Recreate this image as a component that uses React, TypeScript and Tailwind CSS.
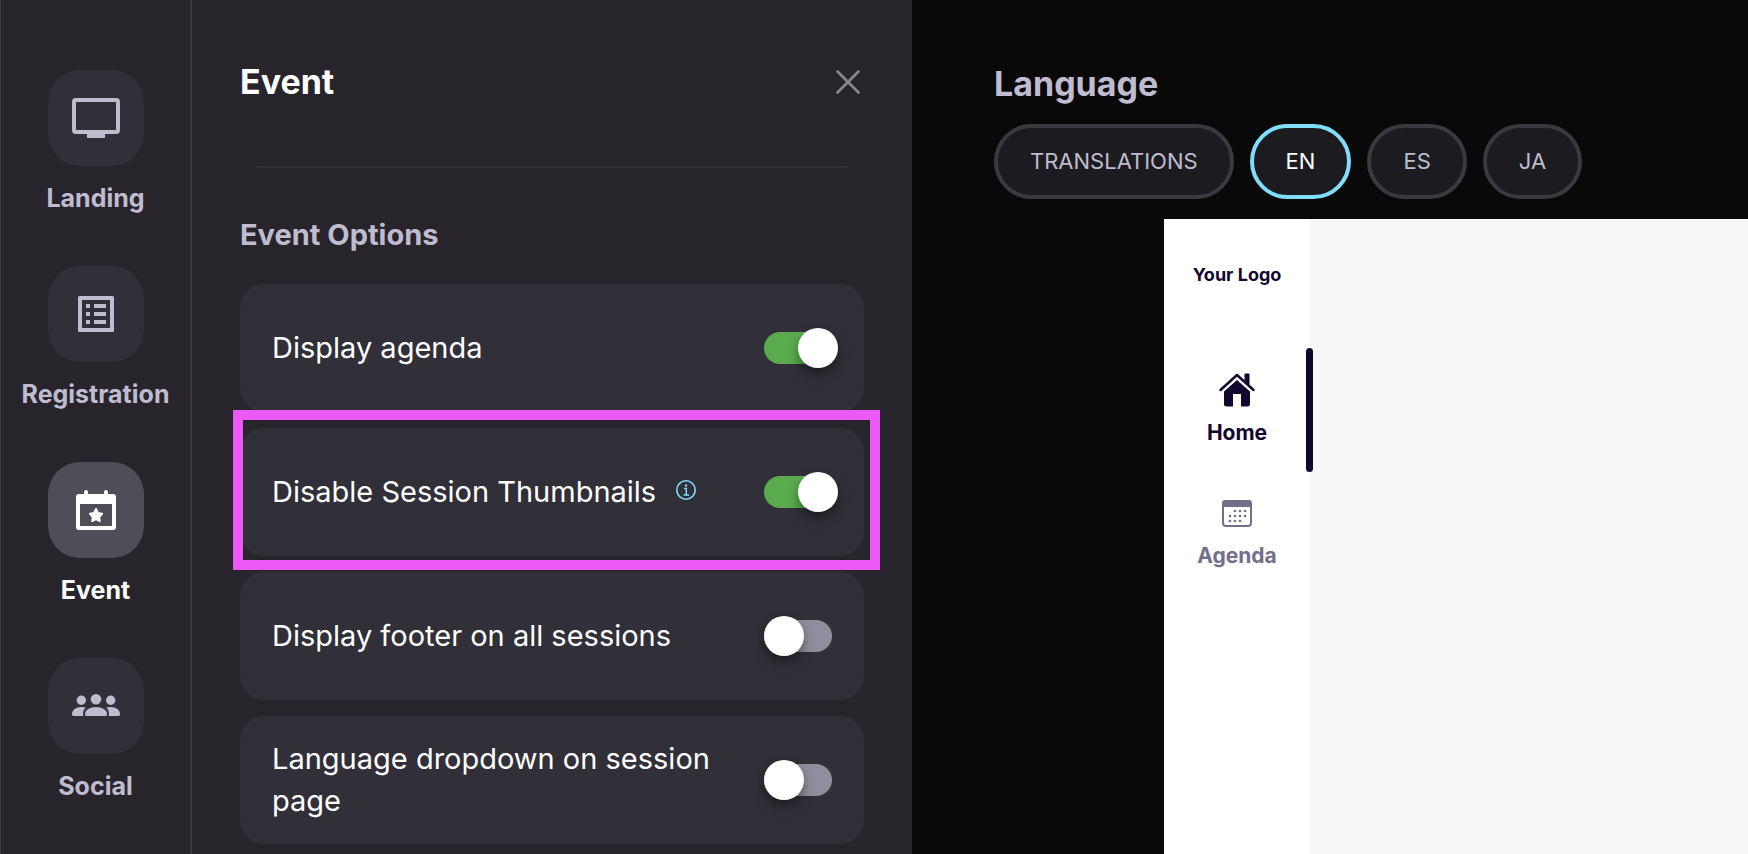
import { useState } from "react";
import type { ReactNode } from "react";

const TvIcon = () => (
  <svg width="48" height="40" viewBox="0 0 48 40" fill="none">
    <rect x="2" y="2" width="44" height="32" rx="2" stroke="currentColor" strokeWidth="4" />
    <path d="M15 34h18v6H15z" fill="currentColor" />
  </svg>
);

const ListIcon = () => (
  <svg width="36" height="36" viewBox="0 0 36 36" fill="currentColor">
    <path
      fillRule="evenodd"
      d="M1.500 0h33A1.500 1.500 0 0 1 36 1.500v33a1.500 1.500 0 0 1-1.500 1.500h-33A1.500 1.500 0 0 1 0 34.500v-33A1.500 1.500 0 0 1 1.500 0zM4 4v28h28V4z"
    />
    <path d="M8 8h4v4H8zM16 8h12v4H16zM8 16h4v4H8zM16 16h12v4H16zM8 24h4v4H8zM16 24h12v4H16z" />
  </svg>
);

const CalendarStarIcon = () => (
  <svg width="40" height="40" viewBox="0 0 40 40" fill="currentColor">
    <path
      fillRule="evenodd"
      d="M8 2a2 2 0 0 1 4 0v2h16V2a2 2 0 0 1 4 0v2h5a3 3 0 0 1 3 3v30a3 3 0 0 1-3 3H3a3 3 0 0 1-3-3V7a3 3 0 0 1 3-3h5zM4 14v22h32V14z"
    />
    <path
      d="M20 19l2 4 4 .8-2.800 3.200.6 4-3.800-1.800L16.200 31l.6-4-2.800-3.200 4-.8z"
      stroke="currentColor"
      strokeWidth="2"
      strokeLinejoin="round"
    />
  </svg>
);

const PeopleIcon = () => (
  <svg width="48" height="24" viewBox="0 0 48 24" fill="currentColor">
    <circle cx="24" cy="5.300" r="5.300" />
    <circle cx="9.300" cy="6.300" r="4.700" />
    <circle cx="38.700" cy="6.300" r="4.700" />
    <path d="M13 20c0-4 5-7 11-7s11 3 11 7c0 1.200-.5 2-1.500 2h-19c-1 0-1.500-.8-1.500-2z" />
    <path d="M14 13.500C11.500 15.500 10.500 18 11.300 22H1.500C.5 22 0 21 0 20c0-4 4-7 9.500-7 1.800 0 3.200.2 4.500.5zM34 13.500c2.500 2 3.500 4.500 2.700 8.500h9.800c1 0 1.500-1 1.500-2 0-4-4-7-9.500-7-1.800 0-3.200.2-4.500.5z" />
  </svg>
);

const HomeIcon = () => (
  <svg width="36" height="34" viewBox="0 0 36 34" fill="currentColor">
    <path d="M18 7l13 11.500V31a2.500 2.500 0 0 1-2.500 2.500H22V21h-8v12.500H7.500A2.500 2.500 0 0 1 5 31V18.500z" />
    <path d="M25.500 1.500a1 1 0 0 1 1-1H29.500a1 1 0 0 1 1 1V12l-5-4.300z" />
    <path d="M1.500 17L18 2l16.500 15" fill="none" stroke="currentColor" strokeWidth="2.500" strokeLinecap="round" strokeLinejoin="round" />
  </svg>
);

const dots = [
  [13, 11], [18, 11], [23, 11],
  [8, 16], [13, 16], [18, 16], [23, 16],
  [8, 21], [13, 21], [18, 21],
];

const AgendaIcon = () => (
  <svg width="30" height="28" viewBox="0 0 30 28" fill="currentColor">
    <rect x="1" y="1" width="28" height="25" rx="3" fill="none" stroke="currentColor" strokeWidth="2" />
    <path d="M0 7V4a4 4 0 0 1 4-4h22a4 4 0 0 1 4 4v3z" />
    {dots.map(([x, y]) => (
      <circle key={`${x}-${y}`} cx={x} cy={y} r="1.300" />
    ))}
  </svg>
);

const InfoIcon = () => (
  <svg width="20" height="20" viewBox="0 0 20 20" fill="none" stroke="#7fdffb">
    <circle cx="10" cy="10" r="9.200" strokeWidth="1.600" />
    <path d="M8 8.500h2.300V15M7.500 15h5.500" strokeWidth="1.500" />
    <circle cx="10" cy="5.500" r="1.200" fill="#7fdffb" stroke="none" />
  </svg>
);

interface NavItemProps {
  label: string;
  icon: ReactNode;
  active: boolean;
  onClick: () => void;
}

const NavItem = ({ label, icon, active, onClick }: NavItemProps) => (
  <button
    onClick={onClick}
    className={`flex w-full flex-col items-center gap-3.5 ${active ? "text-white" : "text-[#c0bcd0]"}`}
  >
    <span
      className={`flex size-24 items-center justify-center rounded-[32px] ${
        active ? "bg-[#4f4d57]" : "bg-[#312f38]"
      }`}
    >
      {icon}
    </span>
    <span className="text-[25px] leading-9 font-bold">{label}</span>
  </button>
);

interface OptionCardProps {
  id: string;
  label: string;
  checked: boolean;
  info?: boolean;
  highlighted?: boolean;
  onChange: () => void;
}

const OptionCard = ({ id, label, checked, info, highlighted, onChange }: OptionCardProps) => (
  <li className="relative flex min-h-32 items-center justify-between gap-10 rounded-3xl bg-[#312f38] px-8">
    <div className="flex items-center gap-5">
      <label htmlFor={id} className="text-[29px] leading-[42px] text-white">
        {label}
      </label>
      {info && (
        <button aria-label="More information" className="pb-1">
          <InfoIcon />
        </button>
      )}
    </div>
    <input
      id={id}
      type="checkbox"
      role="switch"
      checked={checked}
      onChange={onChange}
      className="relative h-8 w-[68px] shrink-0 appearance-none rounded-full bg-[#918d9e] before:absolute before:-top-1 before:left-0 before:size-10 before:rounded-full before:bg-white before:shadow-[0_6px_12px_rgba(0,0,0,0.4)] checked:bg-[#5aab4e] checked:before:left-[34px]"
    />
    {highlighted && (
      <div className="pointer-events-none absolute -top-[18px] -right-4 -bottom-3.5 -left-[7px] z-10 border-10 border-[#eb59f7]" />
    )}
  </li>
);

const navItems = [
  { label: "Landing", icon: <TvIcon /> },
  { label: "Registration", icon: <ListIcon /> },
  { label: "Event", icon: <CalendarStarIcon /> },
  { label: "Social", icon: <PeopleIcon /> },
];

const options = [
  { id: "agenda", label: "Display agenda" },
  { id: "thumbnails", label: "Disable Session Thumbnails", info: true, highlighted: true },
  { id: "footer", label: "Display footer on all sessions" },
  { id: "language", label: "Language dropdown on session page" },
];

const languages = ["TRANSLATIONS", "EN", "ES", "JA"];

export default function App() {
  const [section, setSection] = useState("Event");
  const [language, setLanguage] = useState("EN");
  const [enabled, setEnabled] = useState(["agenda", "thumbnails"]);

  const toggle = (id: string) =>
    setEnabled((prev) => (prev.includes(id) ? prev.filter((item) => item !== id) : [...prev, id]));

  return (
    <div className="flex min-h-screen bg-[#090909] font-['Inter',sans-serif]">
      <nav className="flex w-48 shrink-0 flex-col gap-[50px] border-r-2 border-l border-r-[#3b393f] border-l-[#3b393f] bg-[#27252b] pt-[70px]">
        {navItems.map((item) => (
          <NavItem
            key={item.label}
            {...item}
            active={section === item.label}
            onClick={() => setSection(item.label)}
          />
        ))}
      </nav>

      <section className="w-[720px] shrink-0 bg-[#27252b] px-12 pt-[58px]">
        <header className="flex items-center justify-between">
          <h1 className="text-[34px] leading-12 font-bold text-white">Event</h1>
          <button aria-label="Close" className="pr-1 text-[#87858d]">
            <svg width="24" height="24" viewBox="0 0 24 24" stroke="currentColor" strokeWidth="2.800" strokeLinecap="round">
              <path d="M1.500 1.500l21 21M22.500 1.500l-21 21" />
            </svg>
          </button>
        </header>
        <hr className="mx-4 mt-15 h-0.5 rounded-full border-0 bg-[#312f38]" />
        <h2 className="mt-[46px] text-[29px] leading-[42px] font-bold text-[#c0bcd0]">Event Options</h2>
        <ul className="mt-7 flex flex-col gap-4">
          {options.map((option) => (
            <OptionCard
              key={option.id}
              {...option}
              checked={enabled.includes(option.id)}
              onChange={() => toggle(option.id)}
            />
          ))}
        </ul>
      </section>

      <main className="flex min-w-0 flex-1 flex-col pt-[60px]">
        <div className="pl-[82px]">
          <h2 className="text-[34px] leading-12 font-bold text-[#c0bcd0]">Language</h2>
          <div className="mt-4 flex gap-4">
            {languages.map((item) => (
              <button
                key={item}
                onClick={() => setLanguage(item)}
                className={`h-[75px] rounded-full border-4 bg-[#1c1b1f] px-8 text-[22px] ${
                  item === language ? "border-[#7fdffb] text-white" : "border-[#3b393f] text-[#c0bcd0]"
                }`}
              >
                {item}
              </button>
            ))}
          </div>
        </div>

        <div className="mt-5 ml-[252px] flex flex-1 bg-[#f6f8f8]">
          <aside className="w-[146px] bg-white text-center font-bold text-[#13062f]">
            <p className="pt-10 text-lg leading-8">Your Logo</p>
            <nav className="mt-[57px]">
              <a href="#home" className="relative flex h-[124px] flex-col items-center gap-3 pt-[25px] text-[21px] leading-7">
                <HomeIcon />
                Home
                <span className="absolute top-0 -right-[3px] h-full w-[7px] rounded-full bg-[#13062f]" />
              </a>
              <a href="#agenda" className="flex h-[124px] flex-col items-center gap-3.5 pt-7 text-[21px] leading-7 text-[#756e88]">
                <AgendaIcon />
                Agenda
              </a>
            </nav>
          </aside>
        </div>
      </main>
    </div>
  );
}
